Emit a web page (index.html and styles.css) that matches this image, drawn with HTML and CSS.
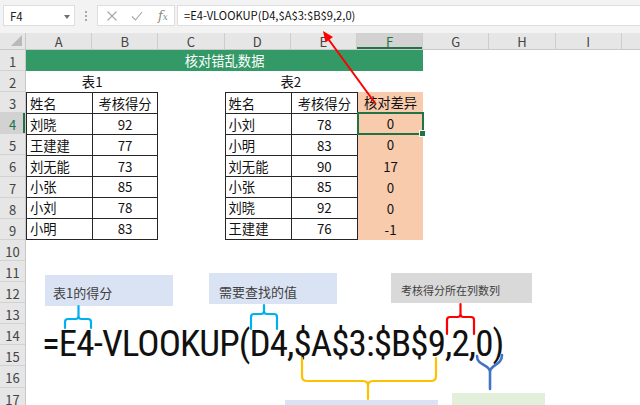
FILE: index.html
```html
<!DOCTYPE html>
<html lang="zh">
<head>
<meta charset="utf-8">
<title>核对错乱数据</title>
<link rel="stylesheet" href="styles.css">
</head>
<body>
<div class="page">
  <div class="toolbar">
    <div class="namebox"><span>F4</span><span class="caret"></span></div>
    <div class="grip"><i></i><i></i><i></i></div>
    <div class="fxbox">
      <svg class="ic" width="12" height="12" viewBox="0 0 12 12"><path d="M1.5 1.5 L10.5 10.5 M10.5 1.5 L1.5 10.5" stroke="#a6a6a6" stroke-width="1.1" fill="none"/></svg>
      <svg class="ic" width="12" height="12" viewBox="0 0 12 12"><path d="M1 6.5 L4.5 10 L11 2" stroke="#a6a6a6" stroke-width="1.1" fill="none"/></svg>
      <span class="fx"><i>f</i><span class="x">x</span></span>
    </div>
    <div class="formula">=E4-VLOOKUP(D4,$A$3:$B$9,2,0)</div>
  </div>

  <div class="sheet">
    <div class="corner"><span class="tri"></span></div>
    <div class="colheads">
      <div class="ch">A</div><div class="ch">B</div><div class="ch">C</div><div class="ch">D</div><div class="ch">E</div><div class="ch sel">F</div><div class="ch">G</div><div class="ch">H</div><div class="ch">I</div><div class="ch rest"></div>
    </div>
    <div class="rowheads">
      <div class="rh">1</div><div class="rh">2</div><div class="rh">3</div><div class="rh sel">4</div><div class="rh">5</div><div class="rh">6</div><div class="rh">7</div><div class="rh">8</div><div class="rh">9</div><div class="rh">10</div><div class="rh">11</div><div class="rh">12</div><div class="rh">13</div><div class="rh">14</div><div class="rh">15</div><div class="rh">16</div><div class="rh">17</div>
    </div>
    <div class="cells">
      <div class="title">核对错乱数据</div>
      <div class="cap cap1">表1</div>
      <div class="cap cap2">表2</div>
      <div class="tbl t1">
        <div class="td">姓名</div><div class="td num">考核得分</div>
        <div class="td">刘晓</div><div class="td num">92</div>
        <div class="td">王建建</div><div class="td num">77</div>
        <div class="td">刘无能</div><div class="td num">73</div>
        <div class="td">小张</div><div class="td num">85</div>
        <div class="td">小刘</div><div class="td num">78</div>
        <div class="td">小明</div><div class="td num">83</div>
      </div>
      <div class="t2">
        <div class="tbl t2grid">
          <div class="td">姓名</div><div class="td num">考核得分</div>
          <div class="td">小刘</div><div class="td num">78</div>
          <div class="td">小明</div><div class="td num">83</div>
          <div class="td">刘无能</div><div class="td num">90</div>
          <div class="td">小张</div><div class="td num">85</div>
          <div class="td">刘晓</div><div class="td num">92</div>
          <div class="td">王建建</div><div class="td num">76</div>
        </div>
        <div class="diff">
          <div class="dd">核对差异</div>
          <div class="dd active">0</div>
          <div class="dd">0</div>
          <div class="dd">17</div>
          <div class="dd">0</div>
          <div class="dd">0</div>
          <div class="dd">-1</div>
        </div>
      </div>
    </div>
  </div>

  <div class="note n1">表1的得分</div>
  <div class="note n2">需要查找的值</div>
  <div class="note n3">考核得分所在列数列</div>
  <div class="note n4"></div>
  <div class="note n5">精确查找</div>
  <div class="big">=E4-VLOOKUP(D4,$A$3:$B$9,2,0)</div>

  <svg class="marks" width="640" height="405" viewBox="0 0 640 405">
    <g fill="none" stroke-width="2.2" stroke-linecap="round" stroke-linejoin="round">
      <path stroke="#00b0f0" d="M65 328 V322 Q65 319 68 319 H75.5 Q78.5 319 78.5 316 V306 M78.5 316 Q78.5 319 81.5 319 H88 Q91 319 91 322 V328"/>
      <path stroke="#00b0f0" d="M251 329 V317 Q251 314 254 314 H261 Q264 314 264 311 V305 M264 311 Q264 314 267 314 H274 Q277 314 277 317 V329"/>
      <path stroke="#ff0000" d="M447 334 V320 Q447 317 450 317 H457.5 Q460.5 317 460.5 314 V304 M460.5 314 Q460.5 317 463.5 317 H471 Q474 317 474 320 V334"/>
      <path stroke="#ffc000" d="M302 358 V376 Q302 381 307 381 H363 Q368 381 368 386 V399 M368 386 Q368 381 373 381 H431 Q436 381 436 376 V358"/>
      <path stroke="#4472c4" stroke-width="2.6" d="M477 356 C477 366 490 364 490 372 V389 M502 355 C502 366 490 364 490 372"/>
      <path stroke="#ff0000" stroke-width="2" d="M375 103 L329 40"/>
    </g>
    <polygon fill="#ff0000" points="323,31 333,37 325.5,42.5"/>
  </svg>
</div>
</body>
</html>
```

FILE: styles.css
```css
* { box-sizing: border-box; }

body {
  margin: 0;
  background: #fff;
  font-family: "Noto Sans CJK SC", sans-serif;
  color: #111;
}

.page {
  position: relative;
  width: 640px;
  height: 405px;
  overflow: hidden;
}

/* ---------- formula toolbar ---------- */
.toolbar {
  display: flex;
  align-items: flex-start;
  height: 33px;
  padding-top: 5px;
  background: #f3f3f3;
}

.namebox {
  margin-left: 3px;
  width: 72px;
  height: 21px;
  display: flex;
  align-items: center;
  justify-content: space-between;
  padding: 0 4px 0 6px;
  background: #fff;
  border: 1px solid #dedede;
  font-size: 11.5px;
  color: #222;
}

.caret {
  width: 0;
  height: 0;
  margin-top: 2px;
  border-left: 3.5px solid transparent;
  border-right: 3.5px solid transparent;
  border-top: 4px solid #707070;
}

.grip {
  width: 22px;
  height: 21px;
  display: flex;
  flex-direction: column;
  align-items: center;
  justify-content: center;
  gap: 2px;
}

.grip i {
  width: 2px;
  height: 2px;
  background: #a8a8a8;
}

.fxbox {
  width: 78px;
  height: 21px;
  display: flex;
  align-items: center;
  padding-left: 8px;
  gap: 13px;
  background: #fff;
  border: 1px solid #dedede;
}

.fx {
  font-family: "DejaVu Serif", serif;
  font-size: 13px;
  color: #8a8a8a;
  margin-left: 2px;
}

.fx .x {
  font-size: 9px;
  font-style: italic;
}

.formula {
  flex: 1;
  margin-left: 2px;
  height: 21px;
  padding-left: 6px;
  background: #fff;
  border: 1px solid #dedede;
  border-right: none;
  font-size: 11.2px;
  line-height: 19px;
  color: #111;
  white-space: nowrap;
}

/* ---------- sheet ---------- */
.sheet {
  display: grid;
  grid-template-columns: 26px 1fr;
  grid-template-rows: 17px auto;
}

.corner {
  display: flex;
  align-items: flex-end;
  justify-content: flex-end;
  padding: 0 3px 3px 0;
  background: #e6e6e6;
  border-right: 1px solid #c8c8c8;
  border-bottom: 1px solid #c8c8c8;
}

.tri {
  width: 11px;
  height: 11px;
  background: #b9b9b9;
  clip-path: polygon(100% 0, 100% 100%, 0 100%);
}

.colheads {
  display: flex;
  background: #e6e6e6;
  border-bottom: 1px solid #c8c8c8;
}

.ch {
  flex: none;
  width: 66.2px;
  border-right: 1px solid #cdcdcd;
  text-align: center;
  font-size: 13px;
  line-height: 17px;
  color: #444;
}

.ch.sel {
  background: #d2d2d2;
  color: #217346;
  box-shadow: inset 0 -2px 0 #217346;
}

.ch.rest {
  flex: 1;
  border-right: none;
}

.rowheads {
  background: #e6e6e6;
  border-right: 1px solid #c8c8c8;
}

.rh {
  height: 21.1px;
  border-bottom: 1px solid #d2d2d2;
  text-align: center;
  font-size: 13px;
  line-height: 23px;
  color: #444;
}

.rh.sel {
  background: #d2d2d2;
  color: #217346;
  box-shadow: inset -2px 0 0 #217346;
}

.cells {
  display: grid;
  grid-template-columns: repeat(9, 66.2px) 1fr;
  grid-template-rows: repeat(17, 21.1px);
  font-size: 13.3px;
}

.title {
  grid-column: 1 / 7;
  grid-row: 1;
  background: #339966;
  color: #fff;
  text-align: center;
  line-height: 21px;
}

.cap {
  grid-row: 2;
  text-align: center;
  line-height: 22px;
}

.cap1 { grid-column: 1 / 3; }
.cap2 { grid-column: 4 / 6; }

.tbl {
  display: grid;
  grid-template-columns: 1fr 1fr;
  grid-template-rows: repeat(7, 1fr);
  gap: 1px;
  background: #262626;
  border: 1px solid #262626;
}

.t1 {
  grid-column: 1 / 3;
  grid-row: 3 / 10;
}

.td {
  display: flex;
  align-items: center;
  padding-left: 3px;
  background: #fff;
  color: #111;
}

.td.num {
  justify-content: center;
  padding-left: 0;
}

.t2 {
  grid-column: 4 / 7;
  grid-row: 3 / 10;
  display: flex;
}

.t2grid {
  flex: none;
  width: 133.4px;
}

.diff {
  flex: 1;
  display: flex;
  flex-direction: column;
  background: #f8cbad;
}

.dd {
  flex: 1;
  display: flex;
  align-items: center;
  justify-content: center;
  color: #111;
}

.dd.active {
  position: relative;
  outline: 2px solid #217346;
  outline-offset: -1px;
}

.dd.active::after {
  content: "";
  position: absolute;
  right: -3px;
  bottom: -3px;
  width: 5px;
  height: 5px;
  background: #217346;
  border: 1px solid #fff;
  box-sizing: content-box;
}

/* ---------- floating shapes ---------- */
.note {
  position: absolute;
  color: #404040;
  font-size: 13px;
  line-height: 17px;
  white-space: nowrap;
}

.n1 {
  left: 45px;
  top: 275px;
  width: 128px;
  height: 31px;
  padding: 9px 0 0 8px;
  background: #dae3f3;
}

.n2 {
  left: 209px;
  top: 273px;
  width: 128px;
  height: 31px;
  padding: 10px 0 0 10px;
  background: #dae3f3;
}

.n3 {
  left: 391px;
  top: 273px;
  width: 141px;
  height: 30px;
  padding: 10px 0 0 10px;
  font-size: 11px;
  line-height: 15px;
  background: #d9d9d9;
}

.n4 {
  left: 285px;
  top: 400px;
  width: 153px;
  height: 20px;
  background: #dae3f3;
}

.n5 {
  left: 452px;
  top: 393px;
  width: 93px;
  height: 20px;
  padding: 9px 0 0 11px;
  background: #e2efda;
}

.big {
  position: absolute;
  left: 42px;
  top: 325px;
  font-family: "Roboto Condensed", "Noto Sans CJK SC", sans-serif;
  font-size: 37px;
  line-height: 37px;
  letter-spacing: -0.9px;
  color: #111;
  white-space: nowrap;
}

.marks {
  position: absolute;
  left: 0;
  top: 0;
  pointer-events: none;
}
```
